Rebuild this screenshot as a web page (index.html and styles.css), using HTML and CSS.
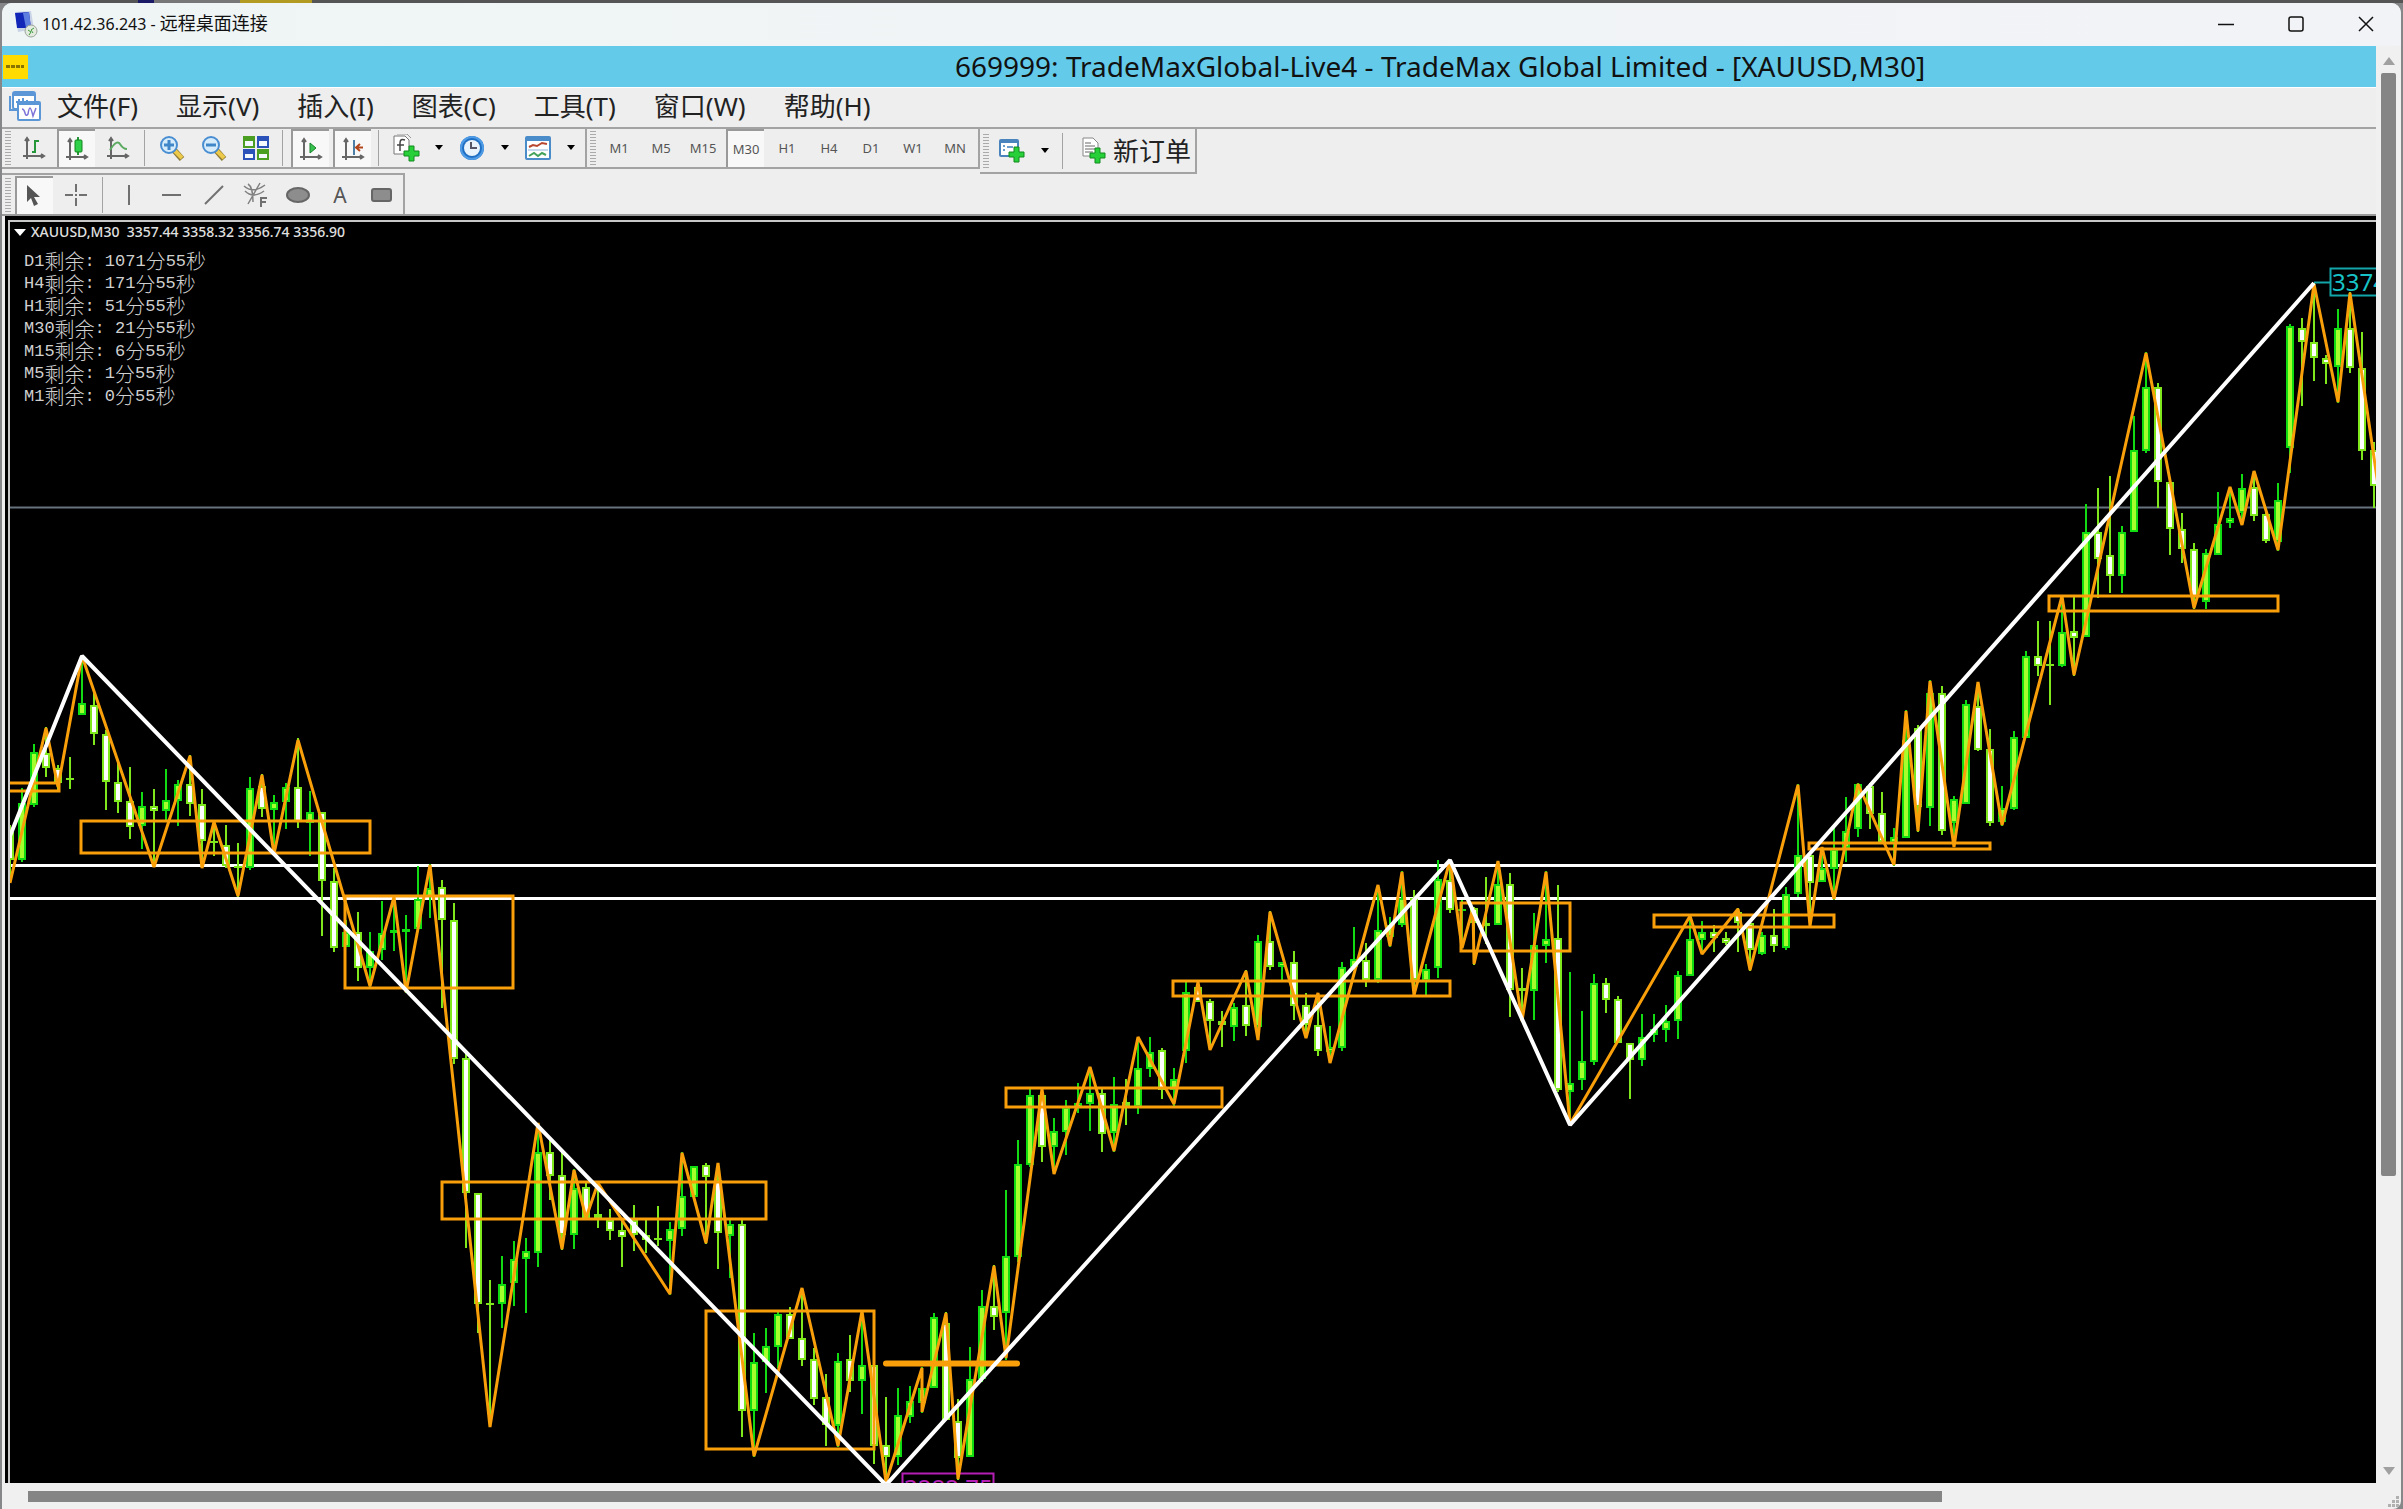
FILE: index.html
```html
<!DOCTYPE html>
<html lang="zh-CN">
<head>
<meta charset="utf-8">
<title>101.42.36.243 - 远程桌面连接</title>
<link rel="stylesheet" href="styles.css">
</head>
<body>
<div class="window">
  <header class="titlebar">
    <svg class="titlebar-icon" width="24" height="28" viewBox="0 0 24 28">
      <path d="M1 2 L17 1 L20 19 L4 22Z" fill="#c9d3e6"/><path d="M1 3 L15 2 L17 18 L3 18Z" fill="#1226b8"/>
      <path d="M9 3 L15 2 L17 18 L12 18Z" fill="#5f7fe0"/><circle cx="17" cy="21" r="6" fill="#e3ebdf" stroke="#9aa49a"/>
      <path d="M14 20l3 2-2 3M20 18l-3 2 2 3" fill="none" stroke="#3d9a3d"/>
    </svg>
    <h1 class="titlebar-text">101.42.36.243 - <span class="titlebar-cjk">远程桌面连接</span></h1>
    <div class="window-controls">
      <button type="button" aria-label="最小化"><svg width="16" height="16"><path d="M0 8.500H16" stroke="#111" stroke-width="1.500"/></svg></button>
      <button type="button" aria-label="最大化"><svg width="16" height="16"><rect x="1" y="1" width="14" height="14" rx="2" fill="none" stroke="#111" stroke-width="1.500"/></svg></button>
      <button type="button" aria-label="关闭"><svg width="16" height="16"><path d="M1 1L15 15M15 1L1 15" stroke="#111" stroke-width="1.500"/></svg></button>
    </div>
  </header>

  <div class="viewport">
    <main class="session">
      <div class="caption">
        <svg class="caption-icon" width="25" height="24"><rect width="25" height="24" fill="#ffdb00"/><path d="M3 11.500H21" stroke="#8a7400" stroke-width="3" stroke-dasharray="4 1"/></svg>
        <h2 class="caption-text">669999: TradeMaxGlobal-Live4 - TradeMax Global Limited - [XAUUSD,M30]</h2>
      </div>

      <nav class="menu">
        <svg class="menu-icon" width="32" height="32" viewBox="0 0 32 32">
          <rect x="4" y="2" width="22" height="17" rx="2" fill="#fff" stroke="#5b97d6" stroke-width="2"/><path d="M4 4h22" stroke="#5b97d6" stroke-width="4"/>
          <path d="M1 6v14h10" fill="none" stroke="#5b97d6" stroke-width="2"/>
          <path d="M7 12h3M10 9v6M14 8v7M18 10v5" stroke="#5b97d6" stroke-width="2"/>
          <rect x="9" y="12" width="22" height="18" rx="1" fill="#fff" stroke="#5b97d6" stroke-width="2"/><path d="M9 13.500h22" stroke="#5b97d6" stroke-width="3"/>
          <path d="M13 19q2 0 3 4t3 1q1-6 2-6t3 8l3-8" fill="none" stroke="#7d74d8" stroke-width="1.500"/>
        </svg>
        <button type="button">文件(F)</button>
        <button type="button">显示(V)</button>
        <button type="button">插入(I)</button>
        <button type="button">图表(C)</button>
        <button type="button">工具(T)</button>
        <button type="button">窗口(W)</button>
        <button type="button">帮助(H)</button>
      </nav>

      <div class="toolbar-row">
        <div class="toolbar">
          <span class="grip"></span>
          <button class="tool" type="button" aria-label="柱状图"><svg width="24" height="24"><path d="M5 3V23M1 20H21M3 5l2-3 2 3M19 18l3 2-3 2" class="axis"/><path d="M13 4V17M13 5h4M10 16h3" class="green"/></svg></button>
          <button class="tool pressed" type="button" aria-label="阴阳烛"><svg width="24" height="24"><path d="M5 3V23M1 20H21M3 5l2-3 2 3M19 18l3 2-3 2" class="axis"/><path d="M13 0V18" class="green"/><rect x="10" y="3" width="7" height="12" rx="1" fill="#2fd04a" stroke="#12851f"/></svg></button>
          <button class="tool" type="button" aria-label="折线图"><svg width="24" height="24"><path d="M5 3V23M1 20H21M3 5l2-3 2 3M19 18l3 2-3 2" class="axis"/><path d="M4 14Q11 3 14 8T21 13" fill="none" stroke="#5cab62" stroke-width="2"/></svg></button>
          <span class="separator"></span>
          <button class="tool" type="button" aria-label="放大"><svg width="26" height="26"><path d="M15 15L23 24" stroke="#8c7a35" stroke-width="6"/><path d="M16 16L23 23" stroke="#ecc94b" stroke-width="4"/><circle cx="10" cy="10" r="8" fill="#d6ecfb" stroke="#4a8ed2" stroke-width="2"/><path d="M5 10h10M10 5v10" stroke="#3f87c9" stroke-width="3"/></svg></button>
          <button class="tool" type="button" aria-label="缩小"><svg width="26" height="26"><path d="M15 15L23 24" stroke="#8c7a35" stroke-width="6"/><path d="M16 16L23 23" stroke="#ecc94b" stroke-width="4"/><circle cx="10" cy="10" r="8" fill="#d6ecfb" stroke="#4a8ed2" stroke-width="2"/><path d="M5 10h10" stroke="#3f87c9" stroke-width="3"/></svg></button>
          <button class="tool" type="button" aria-label="平铺窗口"><svg width="26" height="26"><path d="M0 1h12v12H0zM14 14h12v11H14z" fill="#4a9f22"/><path d="M14 1h12v12H14zM0 14h12v11H0z" fill="#2a52b8"/><path d="M2 6h8v5H2zM16 19h8v4h-8zM16 6h8v5h-8zM2 19h8v4H2z" fill="#f4f8ff"/></svg></button>
          <span class="separator"></span>
          <button class="tool pressed" type="button" aria-label="自动滚动"><svg width="24" height="24"><path d="M5 3V23M1 20H21M3 5l2-3 2 3M19 18l3 2-3 2" class="axis"/><path d="M11 6L17 11L11 16Z" fill="#37c24e" stroke="#16822a"/></svg></button>
          <button class="tool pressed" type="button" aria-label="图表平移"><svg width="24" height="24"><path d="M5 3V23M1 20H21M3 5l2-3 2 3M19 18l3 2-3 2" class="axis"/><path d="M13 3V18" stroke="#4c7fa8" stroke-width="2"/><path d="M15 10.500h7M19 7l-4 3.500L19 14" fill="none" stroke="#b1461c" stroke-width="2"/></svg></button>
          <span class="separator"></span>
          <button class="tool" type="button" aria-label="技术指标"><svg width="28" height="28"><path d="M2 2H13L17 6V20H2Z" fill="#fff" stroke="#777"/><path d="M5 0H15L19 4" fill="none" stroke="#999"/><path d="M13 6q-5-2-5 3v8M5 11h7" fill="none" stroke="#444" stroke-width="1.500"/><path d="M17 12h5v5h5v5h-5v5h-5v-5h-5v-5h5z" fill="#27cf38" stroke="#128a1e"/></svg></button>
          <button class="caret" type="button" aria-label="技术指标列表"><svg width="8" height="6"><path d="M0 0h8L4 5z"/></svg></button>
          <button class="tool" type="button" aria-label="时间周期"><svg width="26" height="26"><circle cx="13" cy="13" r="12" fill="#1f6fc4"/><circle cx="13" cy="13" r="11" fill="none" stroke="#4e9be6" stroke-width="2"/><circle cx="13" cy="13" r="8" fill="#e9f3fb"/><path d="M12 7v6h6" fill="none" stroke="#556" stroke-width="2"/></svg></button>
          <button class="caret" type="button" aria-label="时间周期列表"><svg width="8" height="6"><path d="M0 0h8L4 5z"/></svg></button>
          <button class="tool" type="button" aria-label="模板"><svg width="26" height="24"><rect x="1" y="1" width="24" height="22" rx="1" fill="#fff" stroke="#4a8bc9" stroke-width="2"/><path d="M1 3h24" stroke="#4a8bc9" stroke-width="4"/><path d="M4 11l4-2 4 1 5-3 5 1" fill="none" stroke="#b7472f" stroke-width="2"/><path d="M3 14h20" stroke="#8db5d8"/><path d="M4 20l5-3 4 3 4-3 4 2" fill="none" stroke="#43a35b" stroke-width="2"/></svg></button>
          <button class="caret" type="button" aria-label="模板列表"><svg width="8" height="6"><path d="M0 0h8L4 5z"/></svg></button>
        </div>
        <div class="toolbar">
          <span class="grip"></span>
          <button class="tool" type="button">M1</button>
          <button class="tool" type="button">M5</button>
          <button class="tool" type="button">M15</button>
          <button class="tool pressed" type="button">M30</button>
          <button class="tool" type="button">H1</button>
          <button class="tool" type="button">H4</button>
          <button class="tool" type="button">D1</button>
          <button class="tool" type="button">W1</button>
          <button class="tool" type="button">MN</button>
        </div>
        <div class="toolbar toolbar-tall">
          <span class="grip"></span>
          <button class="tool" type="button" aria-label="新图表"><svg width="28" height="26"><rect x="2" y="2" width="18" height="16" rx="1" fill="#fff" stroke="#4a84bd" stroke-width="2"/><path d="M2 3.500h18" stroke="#4a84bd" stroke-width="3"/><path d="M5 8h2M5 12h2M9 9h6" stroke="#6c9cc8" stroke-width="2"/><path d="M16 9h5v5h5v5h-5v5h-5v-5h-5v-5h5z" fill="#27cf38" stroke="#128a1e"/></svg></button>
          <button class="caret" type="button" aria-label="新图表列表"><svg width="8" height="6"><path d="M0 0h8L4 5z"/></svg></button>
          <span class="separator"></span>
          <button class="new-order" type="button"><svg width="26" height="28"><path d="M2 1H12L17 6V19H2Z" fill="#fff" stroke="#888"/><path d="M4 6h6M4 9h10M4 12h10M4 15h8" stroke="#666"/><path d="M14 11h5v5h5v5h-5v5h-5v-5H9v-5h5z" fill="#27cf38" stroke="#128a1e"/></svg>新订单</button>
        </div>
      </div>

      <div class="toolbar-row toolbar-row-draw">
        <div class="toolbar toolbar-draw">
          <span class="grip"></span>
          <button class="tool pressed" type="button" aria-label="光标"><svg width="24" height="24"><path d="M4 1V18L8 14L11 22L15 20L11 13H17Z" fill="#555"/></svg></button>
          <button class="tool" type="button" aria-label="十字准线"><svg width="24" height="24"><path d="M12 1V9M12 15V23M1 12H9M15 12H23" class="ink"/><path d="M11 12h2" class="ink"/></svg></button>
          <span class="separator"></span>
          <button class="tool" type="button" aria-label="垂直线"><svg width="24" height="24"><path d="M11 2V22" class="ink"/></svg></button>
          <button class="tool" type="button" aria-label="水平线"><svg width="24" height="24"><path d="M2 12H21" class="ink"/></svg></button>
          <button class="tool" type="button" aria-label="趋势线"><svg width="24" height="24"><path d="M3 21L21 3" class="ink"/></svg></button>
          <button class="tool" type="button" aria-label="斐波那契"><svg width="26" height="26"><path d="M5 22L17 1M1 4Q10 12 22 3M2 9Q10 17 21 9M5 2q5 3 5 18" class="ink-thin"/><path d="M18 25V16h6M18 20h5" class="ink"/></svg></button>
          <button class="tool" type="button" aria-label="椭圆"><svg width="26" height="20"><ellipse cx="13" cy="10" rx="11" ry="7" fill="#8d8d8d" stroke="#666" stroke-width="2"/></svg></button>
          <button class="tool tool-letter" type="button" aria-label="文字">A</button>
          <button class="tool" type="button" aria-label="矩形"><svg width="24" height="20"><rect x="2" y="4" width="19" height="12" rx="2" fill="#8d8d8d" stroke="#666" stroke-width="2"/></svg></button>
        </div>
      </div>

      <section class="chart">
        <svg class="plot" aria-label="XAUUSD,M30">
          <g transform="translate(-10 -222)">
            <path class="level" d="M10 865.500H4000M10 898.500H4000"/>
            <path class="bid" d="M10 507.500H4000"/>
            <g class="high-label"><path d="M2314 282.500H2330"/><rect x="2330.500" y="268.500" width="100" height="27"/><text x="2332" y="291">3374.20</text></g>
            <g class="low-label"><rect x="902.500" y="1473.500" width="91" height="28"/><text x="904" y="1497">3282.75</text></g>
            <g id="candles"></g>
            <g class="zones">
              <path d="M0 783H59V791H0Z"/>
              <rect x="81" y="821" width="289" height="32"/>
              <rect x="345" y="896" width="168" height="92"/>
              <rect x="442" y="1182" width="324" height="37"/>
              <rect x="706" y="1311" width="168" height="138"/>
              <rect x="1006" y="1088" width="216" height="19"/>
              <rect x="1173" y="981" width="277" height="15"/>
              <rect x="1461" y="903" width="109" height="48"/>
              <rect x="1654" y="915" width="180" height="12"/>
              <rect x="1809" y="843" width="181" height="6"/>
              <rect x="2049" y="596" width="229" height="15"/>
              <path class="thick" d="M886 1363.500H1017"/>
            </g>
            <polyline class="swing-minor" points="10,883 46,728 58,787 82,656 154,867 190,756 202,868 214,822 238,896 262,775 274,854 298,740 370,986 394,897 406,992 430,865 490,1427 538,1123 562,1249 574,1170 586,1218 598,1183 670,1294 682,1153 706,1243 718,1163 754,1456 802,1288 838,1446 862,1311 886,1482 922,1368 922,1412 946,1313 958,1479 994,1266 1006,1358 1042,1089 1054,1174 1090,1067 1114,1151 1138,1037 1174,1104 1198,982 1210,1050 1246,971 1258,1040 1270,912 1306,1038 1318,993 1330,1063 1378,885 1390,946 1402,872 1414,995 1450,860 1462,948 1473,908 1474,964 1498,861 1522,1021 1546,872 1570,1124 1690,916 1702,954 1738,909 1750,970 1798,785 1810,926 1822,847 1834,899 1858,784 1894,865 1906,711 1918,831 1930,681 1954,847 1978,682 2002,825 2062,596 2074,675 2146,353 2194,608 2230,487 2242,525 2254,471 2278,550 2314,284 2338,402 2350,293 2378,485"/>
            <polyline class="swing-major" points="10,836 82,656 886,1485 1450,860 1570,1125 2314,283"/>
          </g>
        </svg>
        <div class="chart-info">
          <p class="quote"><svg width="12" height="7"><path d="M0 0h12L6 7z" fill="#fff"/></svg><span>XAUUSD,M30  3357.44 3358.32 3356.74 3356.90</span></p>
          <ul class="countdown">
            <li>D1<span>剩余</span>: 1071<span>分</span>55<span>秒</span></li>
            <li>H4<span>剩余</span>: 171<span>分</span>55<span>秒</span></li>
            <li>H1<span>剩余</span>: 51<span>分</span>55<span>秒</span></li>
            <li>M30<span>剩余</span>: 21<span>分</span>55<span>秒</span></li>
            <li>M15<span>剩余</span>: 6<span>分</span>55<span>秒</span></li>
            <li>M5<span>剩余</span>: 1<span>分</span>55<span>秒</span></li>
            <li>M1<span>剩余</span>: 0<span>分</span>55<span>秒</span></li>
          </ul>
        </div>
      </section>
    </main>

    <div class="scroll-y">
      <svg width="12" height="8"><path d="M6 0L12 8H0z" fill="#a0a0a0"/></svg>
      <div class="track-y"><div class="thumb-y"></div></div>
      <svg width="12" height="8"><path d="M6 8L12 0H0z" fill="#a0a0a0"/></svg>
    </div>
    <div class="scroll-x"><div class="thumb-x"></div></div>
    <svg class="size-grip" width="14" height="14"><path d="M9 1h3v3H9zM5 5h3v3H5zM9 5h3v3H9zM1 9h3v3H1zM5 9h3v3H5zM9 9h3v3H9z" fill="#b0b0b0"/></svg>
  </div>
</div>
<script src="chart.js"></script>
</body>
</html>
```
FILE: styles.css
```css
* { box-sizing: border-box; }

body {
  margin: 0;
  padding: 3px 2px 0 2px;
  height: 100vh;
  overflow: hidden;
  background: linear-gradient(90deg, #555 138px, #1a1a66 138px 154px, #777 154px 240px, #b39b22 240px 312px, #555 312px) 0 0 / 100% 3px no-repeat, #858789;
  font-family: "Noto Sans", "Noto Sans CJK SC", sans-serif;
  color: #111;
}

button {
  margin: 0;
  padding: 0;
  border: 0;
  background: none;
  font: inherit;
  color: inherit;
}

.window {
  display: flex;
  flex-direction: column;
  height: 100%;
  background: #f0f0f0;
  border-radius: 10px 10px 8px 0;
  overflow: hidden;
}

.titlebar {
  display: flex;
  align-items: center;
  flex: none;
  height: 43px;
  padding: 0 0 2px 12px;
  background: linear-gradient(90deg, #eff5f5, #f2f3f7);
}

.titlebar-icon { margin-right: 4px; }

.titlebar-text {
  flex: 1;
  margin: 0;
  font-size: 16px;
  line-height: 24px;
  font-weight: 400;
}

.titlebar-cjk { font-size: 18px; }

.window-controls { display: flex; }

.window-controls button {
  display: grid;
  place-items: center;
  width: 70px;
  height: 40px;
}

.viewport {
  flex: 1;
  min-height: 0;
  display: grid;
  grid-template-columns: minmax(0, 1fr) 25px;
  grid-template-rows: minmax(0, 1fr) 26px;
}

.session {
  display: flex;
  flex-direction: column;
  min-height: 0;
  background: #eee;
}

.caption {
  display: flex;
  align-items: center;
  flex: none;
  height: 41px;
  padding-left: 1px;
  background: #64caea;
}

.caption-text {
  margin: 0 0 0 927px;
  font-size: 28px;
  line-height: 41px;
  font-weight: 400;
  white-space: nowrap;
}

.menu {
  display: flex;
  align-items: center;
  flex: none;
  gap: 38px;
  height: 42px;
  padding: 0 0 3px 7px;
  border-top: 1px solid #fff;
  border-bottom: 2px solid #a3a3a3;
  font-size: 26px;
  line-height: 36px;
  color: #222;
}

.menu-icon { margin-right: -22px; }

.toolbar-row {
  display: flex;
  align-items: flex-start;
  flex: none;
  height: 44px;
}

.toolbar {
  display: flex;
  align-items: center;
  gap: 4px;
  height: 40px;
  padding: 0 4px 0 1px;
  border-right: 2px solid #a3a3a3;
  border-bottom: 2px solid #a3a3a3;
}

.toolbar-tall { height: 45px; }

.toolbar-row-draw {
  height: 43px;
  border-bottom: 2px solid #999;
}

.toolbar-draw {
  height: 41px;
  border-top: 2px solid #a3a3a3;
  border-bottom: 0;
  padding-right: 2px;
}

.grip {
  width: 8px;
  height: 34px;
  background: repeating-linear-gradient(#aaa 0 1px, #eee 1px 3px);
  border-left: 2px solid #eee;
}

.separator {
  width: 8px;
  height: 36px;
  border-right: 4px solid transparent;
  background: linear-gradient(90deg, #eee 3px, #a3a3a3 3px) padding-box;
}

.tool {
  display: grid;
  place-items: center;
  width: 38px;
  height: 38px;
  font-size: 13px;
  color: #555;
}

.tool-letter { font-size: 21px; }

.pressed {
  background: #f8f8f8;
  border-top: 2px solid #999;
  border-left: 2px solid #999;
}

.caret {
  display: grid;
  place-items: center;
  width: 20px;
  height: 36px;
}

.new-order {
  display: flex;
  align-items: center;
  gap: 6px;
  padding-left: 10px;
  font-size: 26px;
  line-height: 36px;
  color: #222;
}

.axis { fill: none; stroke: #666; stroke-width: 2; }
.green { fill: none; stroke: #26963a; stroke-width: 2; }
.ink { fill: none; stroke: #707070; stroke-width: 2; }
.ink-thin { fill: none; stroke: #808080; stroke-width: 1.5; }

.chart {
  position: relative;
  flex: 1;
  min-height: 0;
  margin-left: 3px;
  border: solid #000;
  border-width: 4px 0 0 3px;
  background: #000;
}

.plot {
  display: block;
  width: 100%;
  height: 100%;
  border-top: 2px solid #c8c8c8;
  border-left: 2px solid #c8c8c8;
}

.chart-info {
  position: absolute;
  top: 3px;
  left: 6px;
  color: #e0e0e0;
}

.quote {
  display: flex;
  align-items: center;
  gap: 5px;
  margin: 0;
  font-size: 14px;
  line-height: 18px;
  font-weight: 500;
  white-space: pre;
}

.countdown {
  display: grid;
  align-content: space-between;
  height: 157px;
  margin: 9px 0 0 10px;
  padding: 0;
  list-style: none;
  font-family: "Liberation Mono", "Noto Sans CJK SC", monospace;
  font-size: 17px;
  font-weight: 400;
  color: #d0d0d0;
}

.countdown li {
  display: flex;
  align-items: center;
  height: 22px;
  white-space: pre;
}

.countdown span {
  font-family: "Noto Sans CJK SC", sans-serif;
  font-size: 20px;
  font-weight: 300;
  line-height: 22px;
}

.level { stroke: #fff; stroke-width: 3; }
.bid { stroke: #66737c; stroke-width: 2; }

.high-label, .low-label {
  fill: none;
  font-family: "Noto Sans", sans-serif;
  font-size: 24px;
  stroke-width: 2;
}

.high-label { stroke: #12a5a9; }
.high-label text { fill: #17c3c7; stroke: none; }
.low-label { stroke: #b51eb5; }
.low-label text { fill: #b51eb5; stroke: none; }

.wick { stroke-width: 2; }
.up { fill: #a4ff2c; stroke: #11dc11; }
.down { fill: #fff; stroke: #7fe81c; }
.body { stroke-width: 2; }

.zones { fill: none; stroke: #f99f0a; stroke-width: 3; }
.zones .thick { stroke-width: 6; stroke-linecap: round; }
.swing-minor { fill: none; stroke: #f99f0a; stroke-width: 3; stroke-linejoin: bevel; }
.swing-major { fill: none; stroke: #fff; stroke-width: 4; stroke-linejoin: bevel; }

.scroll-y {
  display: flex;
  flex-direction: column;
  align-items: center;
  gap: 8px;
  padding: 11px 0 8px;
}

.track-y { flex: 1; width: 15px; }
.thumb-y { height: 79.6%; background: #858585; border-radius: 2px; }

.scroll-x { padding: 8px 25px 0 26px; }
.thumb-x { width: 82.4%; height: 11px; background: #858585; }

.size-grip { align-self: end; justify-self: end; }
```
FILE: chart.js
```js
// One row per bar, left to right: direction (1 up, 0 down), high, body top, body bottom, low.
const bars = [
[0,825,832,860,883],[1,788,803,860,862],[1,744,752,805,807],[0,727,753,768,777],[0,765,768,783,790],[0,757,779,779,789],
[1,655,703,715,715],[0,693,705,734,745],[0,730,734,782,810],[0,763,782,802,813],[0,767,801,827,839],[1,792,806,826,849],
[0,789,806,811,867],[1,769,800,811,820],[1,780,784,801,826],[0,755,784,804,816],[0,789,804,841,868],[0,822,842,842,856],
[0,825,845,866,868],[0,843,867,867,897],[1,777,788,868,870],[0,774,786,809,817],[1,795,802,810,852],[1,783,787,802,829],
[0,738,787,822,828],[1,791,812,823,856],[0,812,812,881,936],[0,868,881,948,952],[1,920,932,947,947],[0,912,932,968,981],
[1,932,951,968,987],[1,901,933,950,960],[1,897,930,933,951],[1,915,929,931,993],[1,866,899,929,929],[1,864,888,897,918],
[0,880,887,920,1008],[0,903,920,1059,1064],[0,1050,1058,1193,1248],[0,1193,1193,1304,1333],[0,1280,1304,1304,1427],[1,1256,1284,1304,1328],
[1,1241,1259,1283,1306],[1,1238,1251,1259,1313],[1,1123,1152,1253,1267],[0,1140,1152,1176,1200],[0,1152,1175,1235,1250],[1,1169,1188,1235,1249],
[0,1182,1187,1218,1218],[0,1184,1214,1218,1228],[0,1209,1220,1231,1240],[0,1221,1230,1237,1267],[0,1205,1220,1235,1251],[0,1219,1235,1240,1253],
[0,1206,1239,1239,1246],[1,1222,1229,1241,1295],[1,1152,1196,1229,1236],[1,1166,1166,1197,1197],[0,1163,1165,1177,1244],[0,1163,1180,1233,1269],
[1,1219,1224,1236,1278],[0,1220,1224,1411,1437],[1,1333,1362,1411,1457],[1,1328,1346,1362,1393],[1,1311,1314,1347,1368],[0,1307,1314,1339,1339],
[0,1288,1338,1360,1366],[0,1348,1359,1399,1405],[0,1374,1397,1425,1446],[1,1353,1361,1426,1447],[0,1335,1359,1381,1392],[1,1313,1365,1381,1414],
[0,1353,1365,1446,1464],[0,1397,1445,1457,1481],[1,1388,1415,1457,1465],[1,1386,1401,1417,1423],[1,1367,1388,1403,1413],[1,1313,1317,1388,1388],
[0,1312,1323,1420,1420],[0,1399,1421,1458,1480],[1,1347,1379,1457,1457],[1,1290,1306,1379,1382],[0,1265,1306,1317,1330],[1,1190,1256,1313,1360],
[1,1140,1164,1257,1262],[1,1088,1095,1165,1167],[0,1089,1095,1147,1162],[1,1118,1131,1147,1173],[1,1100,1107,1132,1155],[1,1083,1103,1108,1113],
[1,1067,1093,1104,1131],[0,1089,1093,1134,1152],[1,1077,1104,1133,1152],[0,1079,1102,1106,1125],[1,1040,1068,1107,1114],[1,1037,1052,1069,1077],
[0,1048,1050,1090,1099],[1,1068,1079,1090,1106],[1,982,992,1051,1063],[0,982,987,1002,1002],[0,999,1001,1021,1050],[0,1011,1021,1025,1047],
[1,1003,1007,1027,1041],[0,970,1005,1026,1036],[1,935,941,1027,1040],[0,911,941,967,970],[1,962,962,967,980],[0,951,962,1006,1020],
[0,993,1005,1025,1038],[0,993,1025,1051,1056],[1,1026,1047,1052,1063],[1,962,967,1048,1051],[1,927,959,967,967],[0,943,960,980,987],
[1,885,930,980,983],[1,917,925,937,947],[1,871,898,925,927],[0,890,898,980,995],[1,964,969,981,995],[1,860,879,968,978],
[0,860,880,910,913],[1,900,910,910,948],[0,907,908,923,965],[0,877,923,925,944],[1,861,884,925,925],[0,873,884,990,1017],
[0,968,988,991,1022],[1,913,945,991,1020],[1,871,939,946,963],[0,885,938,1090,1092],[1,972,1083,1092,1125],[1,1011,1061,1080,1090],
[1,974,983,1062,1065],[0,978,983,1000,1013],[0,996,999,1043,1043],[0,1043,1043,1060,1099],[1,1014,1037,1060,1066],[1,1014,1029,1035,1042],
[1,1005,1021,1030,1042],[1,971,975,1021,1039],[1,915,939,976,976],[1,921,932,940,954],[0,925,932,938,952],[0,932,938,943,945],
[0,908,912,923,952],[0,920,923,950,971],[1,932,935,954,955],[0,909,935,946,952],[1,887,894,948,950],[1,784,855,894,897],
[0,853,855,883,926],[1,847,868,882,882],[1,827,849,869,900],[1,797,831,848,862],[1,783,784,829,837],[0,783,786,814,829],
[0,792,813,842,842],[1,828,837,843,866],[1,710,740,838,838],[0,725,728,807,832],[1,680,693,808,826],[0,686,693,831,835],
[1,796,799,823,847],[1,700,704,804,804],[0,682,706,750,751],[0,729,749,823,826],[1,786,808,822,826],[1,731,737,809,810],
[1,651,656,738,738],[0,621,656,666,676],[0,621,665,665,705],[1,595,632,666,667],[0,595,631,638,676],[1,504,532,637,637],
[0,488,532,559,598],[0,476,555,576,593],[1,526,532,576,593],[1,416,450,532,532],[1,352,387,451,453],[0,383,387,482,508],
[0,482,482,529,555],[0,513,529,549,563],[0,543,549,597,609],[1,549,553,602,609],[1,492,524,555,555],[1,487,518,523,528],
[1,474,488,513,525],[0,471,487,516,521],[0,512,514,541,543],[1,483,500,542,551],[1,324,326,448,473],[0,318,328,342,406],
[0,283,342,358,381],[0,355,358,364,384],[1,309,328,367,403],[0,292,328,368,373],[0,332,368,451,460],[0,442,450,486,508]
];

const BAR_STEP = 12;
const FIRST_BAR_X = 10;
const SVG_NS = "http://www.w3.org/2000/svg";
const layer = document.getElementById("candles");

function add(name, attributes) {
  const node = document.createElementNS(SVG_NS, name);
  for (const [key, value] of Object.entries(attributes)) node.setAttribute(key, value);
  layer.appendChild(node);
}

bars.forEach(([up, high, top, bottom, low], index) => {
  const x = FIRST_BAR_X + index * BAR_STEP;
  const direction = up ? "up" : "down";
  add("path", { class: "wick " + direction, d: `M${x} ${high}V${low}` });
  if (bottom - top < 2) {
    add("path", { class: "wick " + direction, d: `M${x - 4} ${top}H${x + 4}` });
  } else {
    add("rect", { class: "body " + direction, x: x - 3, y: top + 1, width: 6, height: Math.max(bottom - top - 2, 1) });
  }
});
```
